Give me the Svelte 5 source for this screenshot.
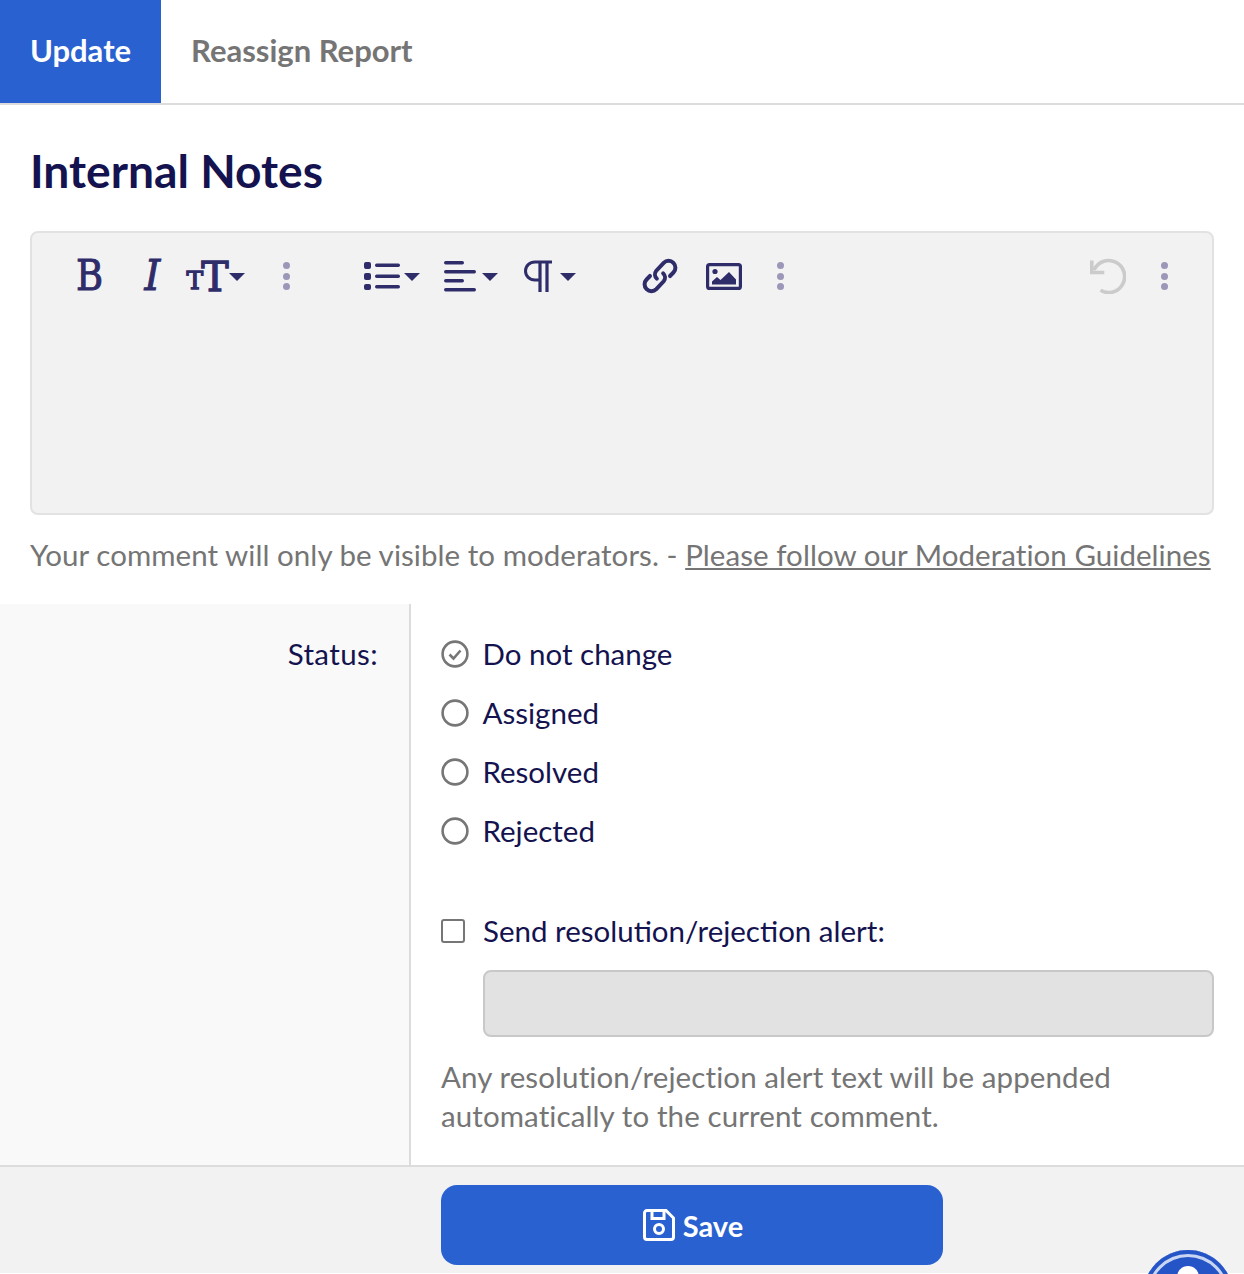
<script>
  const statuses = ['Do not change', 'Assigned', 'Resolved', 'Rejected'];
</script>

<div class="page">
  <nav class="tabs">
    <div class="tab active">Update</div>
    <div class="tab">Reassign Report</div>
  </nav>

  <section class="notes">
    <h1>Internal Notes</h1>
    <div class="editor">
      <div class="toolbar">
        <div class="group">
          <span class="btn glyph bold">B</span>
          <span class="btn glyph ital">I</span>
          <span class="btn">
            <span class="tt"><span class="t1">T</span><span class="t2">T</span></span>
            <svg class="caret" viewBox="0 0 16 8"><path d="M0 0h16L8 8z"/></svg>
          </span>
          <span class="dots first"><i></i><i></i><i></i></span>
        </div>
        <div class="group g2">
          <span class="btn">
            <svg class="ic" width="36" height="28" viewBox="0 0 36 28"><g fill="#2f2c6a"><rect x="0" y="0" width="7" height="7" rx="2"/><rect x="0" y="11" width="7" height="7" rx="2"/><rect x="0" y="22" width="7" height="6" rx="2"/><rect x="11" y="1.500" width="25" height="3.500" rx="1.700"/><rect x="11" y="12.500" width="25" height="3.500" rx="1.700"/><rect x="11" y="23" width="25" height="3.500" rx="1.700"/></g></svg>
            <svg class="caret" viewBox="0 0 16 8"><path d="M0 0h16L8 8z"/></svg>
          </span>
          <span class="btn sp">
            <svg class="ic" width="32" height="32" viewBox="0 0 32 32"><g fill="#2f2c6a"><rect x="0" y="1" width="20" height="3.400" rx="1.700"/><rect x="0" y="10" width="32" height="3.400" rx="1.700"/><rect x="0" y="19" width="20" height="3.400" rx="1.700"/><rect x="0" y="28" width="32" height="3.400" rx="1.700"/></g></svg>
            <svg class="caret" viewBox="0 0 16 8"><path d="M0 0h16L8 8z"/></svg>
          </span>
          <span class="btn sp">
            <svg class="ic para" width="28" height="32" viewBox="0 0 28 32"><path d="M28 2H11C5.500 2 1.500 6 1.500 11S5.500 20 11 20h5" fill="none" stroke="#2f2c6a" stroke-width="3"/><path d="M16 2v30M23 2v30" fill="none" stroke="#2f2c6a" stroke-width="3.200"/></svg>
            <svg class="caret" viewBox="0 0 16 8"><path d="M0 0h16L8 8z"/></svg>
          </span>
        </div>
        <div class="group g3">
          <span class="btn">
            <svg width="38" height="38" viewBox="0 0 36 36" fill="none" stroke="#2f2c6a" stroke-width="3.800" stroke-linecap="round"><path d="M15 20.500a5.500 5.500 0 0 1-.5-7.500L21.500 5.500a6.500 6.500 0 0 1 9.200 9.200L27.500 18"/><path d="M21 15.500a5.500 5.500 0 0 1 .5 7.500L14.500 30.500a6.500 6.500 0 0 1-9.200-9.200L8.500 18"/></svg>
          </span>
          <span class="btn">
            <svg width="36" height="27" viewBox="0 0 36 27"><rect x="1.600" y="1.600" width="32.800" height="23.800" rx="2" fill="none" stroke="#2f2c6a" stroke-width="3.200"/><circle cx="9" cy="8.500" r="2.600" fill="#2f2c6a"/><path d="M6 21.500v-3l5-4.500 3.500 3L23 9l7 7.500v5z" fill="#2f2c6a"/></svg>
          </span>
          <span class="dots"><i></i><i></i><i></i></span>
        </div>
        <div class="group g4">
          <span class="btn">
            <svg width="36" height="36" viewBox="0 0 36 36" fill="none" stroke="#cbcbcb" stroke-width="3.600"><path d="M4 12A16 16 0 1 1 10.500 32.300"/><path d="M1.800 2.500v12h12.500"/></svg>
          </span>
          <span class="dots"><i></i><i></i><i></i></span>
        </div>
      </div>
    </div>
    <p class="help">Your comment will only be visible to moderators. - <a href="#guidelines">Please follow our Moderation Guidelines</a></p>
  </section>

  <section class="form">
    <div class="label">Status:</div>
    <div class="fields">
      {#each statuses as s, i}
        <div class="radio">
          <svg width="28" height="28" viewBox="0 0 28 28" fill="none" stroke="#767676" stroke-width="2.600"><circle cx="14" cy="14" r="12.400"/>{#if i === 0}<path d="M8.500 14.500l4 4 7-8" stroke-width="2.600"/>{/if}</svg>
          <span>{s}</span>
        </div>
      {/each}
      <div class="alert">
        <span class="box"></span>
        <span>Send resolution/rejection alert:</span>
      </div>
      <div class="input"></div>
      <p class="note">Any resolution/rejection alert text will be appended automatically to the current comment.</p>
    </div>
  </section>

  <footer class="foot">
    <button class="save">
      <svg width="32" height="32" viewBox="0 0 32 32" fill="none" stroke="#fff" stroke-width="3"><path d="M4 1.500h19l7.500 7.500v19a2.500 2.500 0 0 1-2.500 2.500H4A2.500 2.500 0 0 1 1.500 28V4A2.500 2.500 0 0 1 4 1.500z"/><path d="M9 2v7.500h12V2"/><circle cx="16" cy="20" r="4.500"/></svg>
      <span>Save</span>
    </button>
  </footer>

  <div class="help-fab"><span class="fab-dot"></span></div>
</div>

<style>
  :global(body) { margin: 0; background: #fff; }
  .page {
    position: relative;
    width: 1244px;
    height: 1274px;
    overflow: hidden;
    font-family: "Lato", "Noto Sans", sans-serif;
    color: #14134f;
  }
  .tabs { display: flex; height: 103px; border-bottom: 2px solid #dcdcdc; }
  .tab {
    display: flex;
    align-items: center;
    padding: 0 30px 4px;
    font-size: 31px;
    font-weight: 700;
    color: #757575;
  }
  .tab.active { background: #2962d0; color: #fff; width: 161px; box-sizing: border-box; justify-content: center; padding: 0 0 4px; }
  .notes { padding: 0 30px; height: 499px; }
  h1 {
    margin: 0;
    padding-top: 38px;
    font-size: 46.200px;
    line-height: 54px;
    height: 54px;
    font-weight: 700;
    color: #14134f;
  }
  .editor {
    margin-top: 34px;
    height: 280px;
    border: 2px solid #e2e2e2;
    border-radius: 8px;
    background: #f2f2f2;
  }
  .toolbar { display: flex; align-items: center; height: 86px; padding: 0 24px 0 26px; }
  .group { display: flex; align-items: center; }
  .g2 { margin-left: 50px; }
  .g3 { margin-left: 46px; }
  .g4 { margin-left: auto; }
  .btn {
    width: 63px;
    height: 40px;
    display: flex;
    align-items: center;
    justify-content: center;
    color: #2f2c6a;
  }
  .g2 .btn, .g3 .btn, .g4 .btn { width: 64px; }
  .sp { margin-left: 15px; }
  .ic { margin-right: 4px; }
  .g2 .sp .ic { margin-right: 6px; }
  .g2 .sp .para { margin-right: 8px; }
  .glyph {
    font-family: "DejaVu Serif", serif;
    font-size: 42px;
    line-height: 40px;
    -webkit-text-stroke: 1px #2f2c6a;
  }
  .bold { transform: scaleX(.88); }
  .ital { font-style: italic; transform: scaleX(.95); }
  .tt {
    display: flex;
    align-items: flex-end;
    font-family: "DejaVu Serif", serif;
    line-height: 1;
    height: 34px;
    margin-top: 4px;
    -webkit-text-stroke: 1.300px #2f2c6a;
  }
  .t1 { font-size: 25px; line-height: 28px; }
  .t2 { font-size: 41px; line-height: 36px; margin-left: -2px; }
  .caret { width: 16px; height: 8px; fill: #2f2c6a; margin-top: 2px; flex: none; }
  .dots { width: 48px; display: flex; flex-direction: column; align-items: center; gap: 3.500px; }
  .dots.first { margin-left: 15px; }
  .dots i { width: 7px; height: 7px; border-radius: 50%; background: #9b97b8; }
  .help { margin: 22px 0 0; font-size: 29.500px; letter-spacing: .05px; line-height: 36px; color: #757575; white-space: nowrap; }
  .help a { color: inherit; text-decoration: underline; }

  .form { display: flex; height: 561px; }
  .label {
    flex: none;
    padding: 32px 31px 0 0;
    box-sizing: border-box;
    width: 409px;
    background: #f9f9f9;
    text-align: right;
    font-size: 29.500px;
    letter-spacing: .4px;
    line-height: 36px;
  }
  .fields {
    flex: 1;
    border-left: 2px solid #dcdcdc;
    padding: 32px 30px 0 30px;
    font-size: 29.500px;
    line-height: 36px;
  }
  .radio { display: flex; align-items: center; height: 36px; margin-bottom: 23px; }
  .radio svg { flex: none; margin-right: 14px; margin-left: -.500px; }
  .alert { display: flex; align-items: center; height: 36px; margin-top: 64px; }
  .box {
    width: 20px; height: 20px;
    border: 2.600px solid #767676;
    border-radius: 3px;
    margin-right: 18px;
    flex: none;
  }
  .input {
    margin: 21px 0 0 42px;
    height: 63px;
    border: 2px solid #c8c8c8;
    border-radius: 8px;
    background: #e2e2e2;
  }
  .note { margin: 20px 0 0; font-size: 29.500px; letter-spacing: .1px; line-height: 39px; color: #757575; }
  .foot {
    height: 108px;
    box-sizing: border-box;
    border-top: 2px solid #dcdcdc;
    background: #f2f2f2;
    padding: 18px 0 0 441px;
  }
  .save {
    width: 502px;
    height: 80px;
    border: 0;
    border-radius: 16px;
    background: #2962d0;
    color: #fff;
    font: 700 29px "Lato", sans-serif;
    display: flex;
    align-items: center;
    justify-content: center;
    gap: 8px;
    padding-right: 4px;
  }
  .help-fab {
    position: absolute;
    left: 1143px;
    top: 1250px;
    width: 90px;
    height: 90px;
    box-sizing: border-box;
    border-radius: 50%;
    background: #2554c7;
    box-shadow: inset 0 0 0 4px #2554c7, inset 0 0 0 7px #c9d6f3;
  }
  .fab-dot {
    position: absolute;
    left: 34px;
    top: 16px;
    width: 22px;
    height: 22px;
    border-radius: 50%;
    background: #fff;
  }
</style>
